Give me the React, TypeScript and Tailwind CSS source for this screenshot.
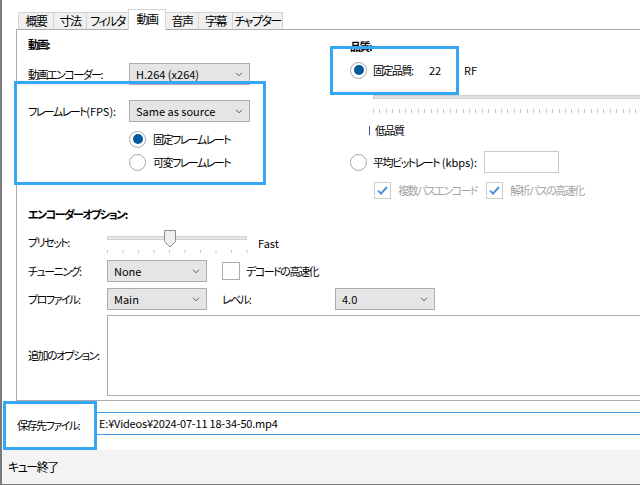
import React from "react";

// Japanese run, set tight like Yu Gothic UI
function J({ children }: { children: React.ReactNode }) {
  return <span className="tracking-[-1.5px]">{children}</span>;
}

function Chevron() {
  return (
    <svg width="8" height="5" viewBox="0 0 8 5" className="shrink-0">
      <path d="M1 0.8l3 3 3-3" fill="none" stroke="#5a5a5a" strokeWidth="1" />
    </svg>
  );
}

function Combo({ value, className }: { value: string; className: string }) {
  return (
    <div
      className={`flex h-[22px] shrink-0 items-center justify-between border border-[#adadad] bg-[#e5e5e5] pr-[6px] pl-[6px] ${className}`}
    >
      <span>{value}</span>
      <Chevron />
    </div>
  );
}

function Radio({ checked }: { checked?: boolean }) {
  return (
    <span className="flex h-[17px] w-[17px] shrink-0 items-center justify-center rounded-full border border-[#a6a6a6] bg-white">
      {checked && <span className="h-[10px] w-[10px] rounded-full bg-[#005a9e]" />}
    </span>
  );
}

function Check({ checked, className }: { checked?: boolean; className: string }) {
  return (
    <span className={`flex shrink-0 items-center justify-center border bg-white ${className}`}>
      {checked && (
        <svg width="11" height="9" viewBox="0 0 11 9">
          <path d="M1 4.6l3 3 6-6.6" fill="none" stroke="#4791dc" strokeWidth="2" />
        </svg>
      )}
    </span>
  );
}

function Tab({ label, className }: { label: string; className: string }) {
  return (
    <div className={`flex shrink-0 items-center justify-center border-t border-[#d4d4d4] text-[12px] ${className}`}>
      <J>{label}</J>
    </div>
  );
}

// preset track bar: track, ticks and the pointed thumb
function PresetSlider() {
  const ticks = [0, 15.5, 31, 46.5, 62, 77.5, 93, 108.5, 124, 139.5];
  return (
    <svg width="141" height="28" viewBox="0 0 141 28" className="shrink-0">
      <rect x="0.5" y="8.5" width="139" height="3" fill="#e6e6e6" stroke="#d2d2d2" />
      {ticks.map((t) => (
        <line key={t} x1={t + 0.5} y1="22" x2={t + 0.5} y2="25" stroke="#c4c4c4" />
      ))}
      <path d="M57.5 2.5h11v11l-5.5 5.5-5.5-5.5z" fill="#efefef" stroke="#8e8e8e" />
    </svg>
  );
}

export default function App() {
  return (
    <div className="relative flex h-[485px] w-[640px] flex-col overflow-hidden border-b border-l-2 border-[#7a7a7a] bg-white font-['Noto_Sans_CJK_JP',sans-serif] text-[11px] whitespace-nowrap text-black [font-feature-settings:'palt'_1]">
      {/* tab strip */}
      <div className="flex h-[29px] shrink-0 items-end pl-[16px]">
        <Tab label="概要" className="h-[17px] w-[35px] border-l bg-[#f0f0f0]" />
        <Tab label="寸法" className="h-[17px] w-[33px] border-l bg-[#f0f0f0]" />
        <Tab label="フィルタ" className="h-[17px] w-[42px] border-l bg-[#f0f0f0]" />
        <Tab label="動画" className="relative z-10 -mb-px h-[21px] w-[38px] border-x bg-white pb-[2px]" />
        <Tab label="音声" className="h-[17px] w-[32px] bg-[#f0f0f0]" />
        <Tab label="字幕" className="h-[17px] w-[34px] border-l bg-[#f0f0f0]" />
        <Tab label="チャプター" className="h-[17px] w-[51px] border-x bg-[#f0f0f0]" />
      </div>

      {/* tab page */}
      <div className="ml-[14px] flex h-[372px] w-[700px] shrink-0 flex-col border border-[#acacac] bg-white">
        <div className="flex h-[170px] shrink-0">
          <div className="w-[313px] shrink-0 pl-[11px]">
            <div className="flex h-[28px] items-center font-bold">
              <J>動画:</J>
            </div>
            <div className="mt-[5px] flex h-[22px] items-center">
              <span className="w-[101px] shrink-0">
                <J>動画エンコーダー:</J>
              </span>
              <Combo value="H.264 (x264)" className="w-[121px]" />
            </div>
            <div className="mt-[15px] flex h-[22px] items-center">
              <span className="w-[101px] shrink-0">
                <J>フレームレート</J>(FPS):
              </span>
              <Combo value="Same as source" className="w-[121px]" />
            </div>
            <div className="mt-[6px] flex flex-col gap-[1px] pl-[101px]">
              <div className="flex h-[22px] items-center gap-[7px]">
                <Radio checked />
                <J>固定フレームレート</J>
              </div>
              <div className="flex h-[22px] items-center gap-[7px]">
                <Radio />
                <J>可変フレームレート</J>
              </div>
            </div>
          </div>

          <div className="flex-1 pl-[20px]">
            <div className="flex h-[24px] items-end font-bold">
              <J>品質:</J>
            </div>
            <div className="mt-[6px] flex h-[20px] items-center">
              <Radio checked />
              <span className="ml-[6px] w-[56px] shrink-0">
                <J>固定品質:</J>
              </span>
              <span className="w-[35px] shrink-0">22</span>
              <span>RF</span>
            </div>
            <div className="mt-[15px] ml-[23px] h-[4px] w-[400px] border border-[#d0d0d0] bg-[#e2e2e2]" />
            <div className="mt-[10px] ml-[23px] h-[4px] w-[400px] bg-[repeating-linear-gradient(90deg,#c6c6c6_0_1px,transparent_1px_6.4px)]" />
            <div className="mt-[7px] ml-[19px] flex h-[20px] items-center gap-[5px]">
              <span className="h-[9px] w-px bg-[#4d4d9c]" />
              <J>低品質</J>
            </div>
            <div className="mt-[11px] flex h-[22px] items-center">
              <Radio />
              <span className="ml-[6px] w-[111px] shrink-0">
                <J>平均ビットレート</J> (kbps):
              </span>
              <span className="h-[22px] w-[75px] border border-[#cacaca] bg-white" />
            </div>
            <div className="mt-[9px] ml-[24px] flex h-[17px] items-center text-[#a3a3a3]">
              <Check checked className="h-[17px] w-[17px] border-[#cccccc]" />
              <span className="ml-[7px] w-[88px] shrink-0">
                <J>複数パスエンコード</J>
              </span>
              <Check checked className="h-[17px] w-[17px] border-[#cccccc]" />
              <span className="ml-[7px]">
                <J>解析パスの高速化</J>
              </span>
            </div>
          </div>
        </div>

        <div className="flex flex-col pl-[11px]">
          <div className="flex h-[28px] items-center font-bold">
            <J>エンコーダーオプション:</J>
          </div>
          <div className="flex h-[28px] items-center">
            <span className="w-[79px] shrink-0">
              <J>プリセット:</J>
            </span>
            <PresetSlider />
            <span className="ml-[10px] pt-[2px]">Fast</span>
          </div>
          <div className="mt-[4px] flex h-[22px] items-center">
            <span className="w-[79px] shrink-0">
              <J>チューニング:</J>
            </span>
            <Combo value="None" className="w-[100px]" />
            <Check className="ml-[15px] h-[18px] w-[18px] border-[#adadad]" />
            <span className="ml-[6px]">
              <J>デコードの高速化</J>
            </span>
          </div>
          <div className="mt-[6px] flex h-[22px] items-center">
            <span className="w-[79px] shrink-0">
              <J>プロファイル:</J>
            </span>
            <Combo value="Main" className="w-[100px]" />
            <span className="ml-[15px] w-[113px] shrink-0">
              <J>レベル:</J>
            </span>
            <Combo value="4.0" className="w-[100px]" />
          </div>
          <div className="mt-[5px] flex h-[81px] items-center">
            <span className="w-[79px] shrink-0">
              <J>追加のオプション:</J>
            </span>
            <div className="h-full w-[600px] border border-[#adadad] bg-white" />
          </div>
        </div>
      </div>

      {/* destination */}
      <div className="relative flex h-[49px] shrink-0 items-start pl-[15px]">
        <span className="w-[80px] shrink-0 self-center">
          <J>保存先ファイル:</J>
        </span>
        <div className="mt-[11px] flex h-[23px] flex-1 items-center border-y border-[#4a9be2] pl-[2px] tracking-[-0.2px]">
          E:¥Videos¥2024-07-11 18-34-50.mp4
        </div>
        <div className="absolute top-0 left-[1px] h-[49px] w-[94px] border-[3px] border-[#35a6f4]" />
      </div>

      {/* status bar */}
      <div className="flex flex-1 items-center bg-[#f3f3f3] pl-[6px] text-[12px]">
        <J>キュー終了</J>
      </div>

      {/* highlight boxes */}
      <div className="absolute top-[81px] left-[12px] h-[104px] w-[252px] border-[3px] border-[#35a6f4]" />
      <div className="absolute top-[46px] left-[328px] h-[49px] w-[129px] border-[3px] border-[#35a6f4] bg-white/0" />
    </div>
  );
}
